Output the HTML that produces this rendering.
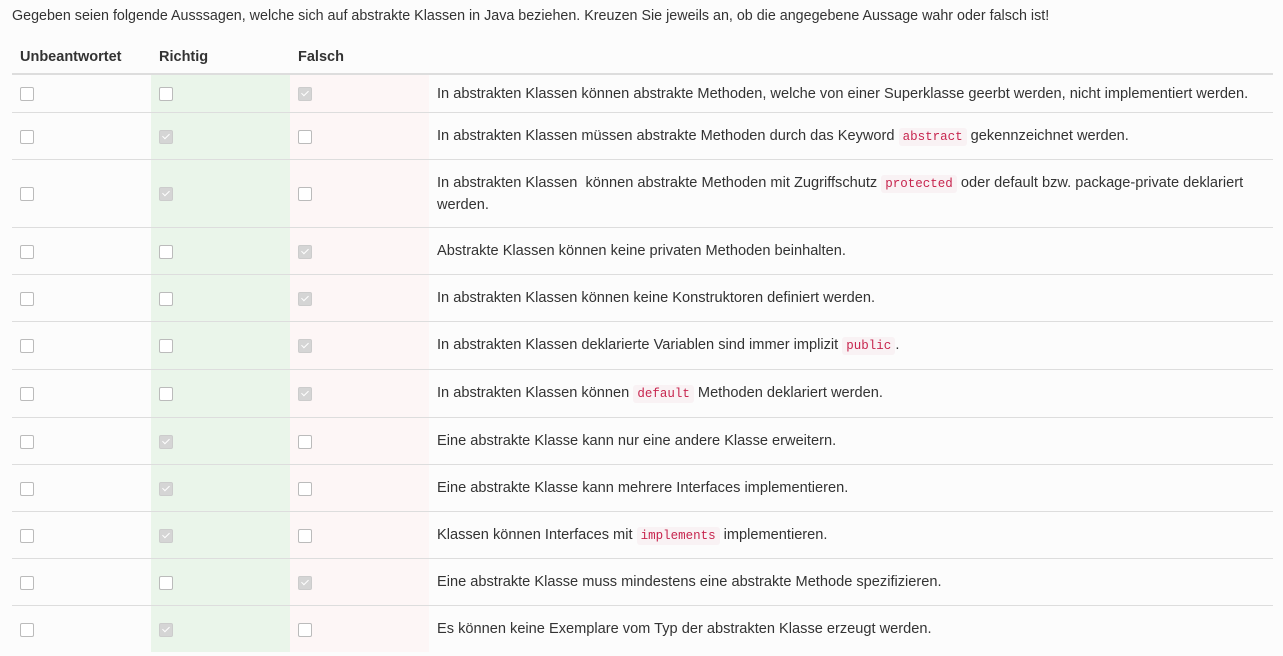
<!DOCTYPE html>
<html><head><meta charset="utf-8"><style>
body{margin:0;background:#fcfcfc;font-family:"Liberation Sans",sans-serif;color:#333;font-size:14.6px;}
.top{position:absolute;left:12px;top:8px;font-size:14.3px;}
table{position:absolute;left:12px;top:40px;width:1261px;border-collapse:collapse;}
th{text-align:left;font-weight:bold;font-size:14.5px;height:33px;padding:0 0 0 8px;border-bottom:2px solid #ddd;vertical-align:middle;}
td{border-top:1px solid #ddd;padding:0 8px;vertical-align:middle;}
td.c{width:123px;}
td.g{background:#eaf5ea;}
td.r{background:#fdf6f6;}
td.t{padding-left:8px;line-height:21px;padding-top:2px;}
.b{display:inline-block;width:12px;height:12px;border:1px solid #bbb;border-radius:2px;background:#fff;vertical-align:middle;position:relative;top:1px;}
.b.k{background:#d5d5d5;border-color:#ccc;}
.b.k:after{content:"";position:absolute;left:4px;top:1px;width:3px;height:6px;border:solid #fff;border-width:0 1.5px 1.5px 0;transform:rotate(45deg);}
code{font-family:"Liberation Mono",monospace;font-size:12.5px;color:#c7254e;background:#f9f2f4;padding:2px 4px;border-radius:3px;}
</style></head><body>
<div class="top">Gegeben seien folgende Ausssagen, welche sich auf abstrakte Klassen in Java beziehen. Kreuzen Sie jeweils an, ob die angegebene Aussage wahr oder falsch ist!</div>
<table>
<tr><th style="width:131px">Unbeantwortet</th><th style="width:131px">Richtig</th><th style="width:130px">Falsch</th><th></th></tr>
<tr style="height:38px"><td class="c"><span class="b"></span></td><td class="c g"><span class="b"></span></td><td class="c r"><span class="b k"></span></td><td class="t">In abstrakten Klassen können abstrakte Methoden, welche von einer Superklasse geerbt werden, nicht implementiert werden.</td></tr>
<tr style="height:47px"><td class="c"><span class="b"></span></td><td class="c g"><span class="b k"></span></td><td class="c r"><span class="b"></span></td><td class="t">In abstrakten Klassen müssen abstrakte Methoden durch das Keyword <code>abstract</code> gekennzeichnet werden.</td></tr>
<tr style="height:68px"><td class="c"><span class="b"></span></td><td class="c g"><span class="b k"></span></td><td class="c r"><span class="b"></span></td><td class="t">In abstrakten Klassen &nbsp;können abstrakte Methoden mit Zugriffschutz <code>protected</code> oder default bzw. package-private deklariert werden.</td></tr>
<tr style="height:47px"><td class="c"><span class="b"></span></td><td class="c g"><span class="b"></span></td><td class="c r"><span class="b k"></span></td><td class="t">Abstrakte Klassen können keine privaten Methoden beinhalten.</td></tr>
<tr style="height:47px"><td class="c"><span class="b"></span></td><td class="c g"><span class="b"></span></td><td class="c r"><span class="b k"></span></td><td class="t">In abstrakten Klassen können keine Konstruktoren definiert werden.</td></tr>
<tr style="height:48px"><td class="c"><span class="b"></span></td><td class="c g"><span class="b"></span></td><td class="c r"><span class="b k"></span></td><td class="t">In abstrakten Klassen deklarierte Variablen sind immer implizit <code>public</code>.</td></tr>
<tr style="height:48px"><td class="c"><span class="b"></span></td><td class="c g"><span class="b"></span></td><td class="c r"><span class="b k"></span></td><td class="t">In abstrakten Klassen können <code>default</code> Methoden deklariert werden.</td></tr>
<tr style="height:47px"><td class="c"><span class="b"></span></td><td class="c g"><span class="b k"></span></td><td class="c r"><span class="b"></span></td><td class="t">Eine abstrakte Klasse kann nur eine andere Klasse erweitern.</td></tr>
<tr style="height:47px"><td class="c"><span class="b"></span></td><td class="c g"><span class="b k"></span></td><td class="c r"><span class="b"></span></td><td class="t">Eine abstrakte Klasse kann mehrere Interfaces implementieren.</td></tr>
<tr style="height:47px"><td class="c"><span class="b"></span></td><td class="c g"><span class="b k"></span></td><td class="c r"><span class="b"></span></td><td class="t">Klassen können Interfaces mit <code>implements</code> implementieren.</td></tr>
<tr style="height:47px"><td class="c"><span class="b"></span></td><td class="c g"><span class="b"></span></td><td class="c r"><span class="b k"></span></td><td class="t">Eine abstrakte Klasse muss mindestens eine abstrakte Methode spezifizieren.</td></tr>
<tr style="height:47px"><td class="c"><span class="b"></span></td><td class="c g"><span class="b k"></span></td><td class="c r"><span class="b"></span></td><td class="t">Es können keine Exemplare vom Typ der abstrakten Klasse erzeugt werden.</td></tr>
</table>
</body></html>
